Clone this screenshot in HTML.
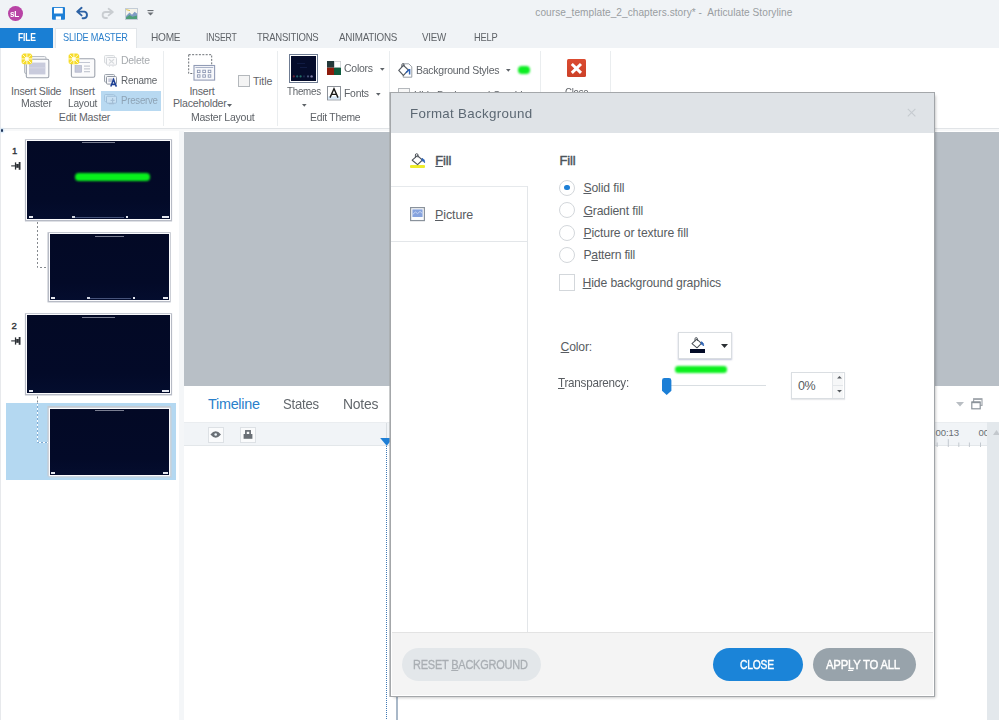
<!DOCTYPE html>
<html>
<head>
<meta charset="utf-8">
<title>Articulate Storyline</title>
<style>
html,body{margin:0;padding:0;}
html{overflow:hidden;}
#root{position:absolute;left:0;top:0;width:999px;height:720px;overflow:hidden;background:#fff;}
body{width:999px;height:720px;overflow:hidden;position:relative;background:#fff;font-family:"Liberation Sans","DejaVu Sans",sans-serif;color:#5b5f63;}
.a{position:absolute;}
.t{position:absolute;white-space:nowrap;line-height:1;}
svg{position:absolute;overflow:visible;}
.sep{position:absolute;width:1px;background:#eaedef;top:51px;height:75px;}
.thumb{position:absolute;background:#030b27;border:1px solid #fff;outline:1px solid #adb1b5;box-sizing:border-box;}
u{text-decoration:underline;text-underline-offset:1px;text-decoration-thickness:0.8px;}
.radio{position:absolute;width:16px;height:16px;border:1px solid #d3d7db;border-radius:50%;background:#fff;box-sizing:border-box;}
.pill{position:absolute;height:33px;border-radius:17px;top:648px;}
</style>
</head>
<body>
<div id="root">
<!-- title bar -->
<div class="a" style="left:0;top:0;width:999px;height:48px;background:#f0f3f6;"></div>
<div class="a" style="left:8px;top:6px;width:14.8px;height:14.8px;border-radius:50%;background:#b843a5;"></div>
<!-- quick access icons -->
<svg style="left:52px;top:7px" width="13" height="13" viewBox="0 0 13 13"><rect x="0" y="0" width="13" height="12.8" rx="1" fill="#1e7fd6"/><rect x="2" y="0.9" width="8.8" height="5.6" fill="#fff"/><rect x="3.8" y="9.4" width="5.2" height="3.4" fill="#fff"/><rect x="6.8" y="9.4" width="2.2" height="0" fill="#1e7fd6"/></svg>
<svg style="left:76px;top:7px" width="14" height="12" viewBox="0 0 14 12"><path d="M1.2 4.6 L5.6 0.8 M1.2 4.6 L5.6 8.4 M1.4 4.6 H8.4 A3.4 3.4 0 0 1 8.4 11.2 H6.6" fill="none" stroke="#2c61a4" stroke-width="1.9" stroke-linecap="round"/></svg>
<svg style="left:100px;top:8px" width="14" height="11" viewBox="0 0 14 11"><path d="M12.8 4 L8.6 0.8 M12.8 4 L8.6 7.4 M12.6 4 H5.6 A3 3 0 0 0 5.6 10 H7" fill="none" stroke="#c9cdd1" stroke-width="1.8" stroke-linecap="round"/></svg>
<svg style="left:125px;top:7.5px" width="13" height="12" viewBox="0 0 13 12"><rect x="0.5" y="0.5" width="12" height="11" fill="#f4f3ea" stroke="#c3ccd6"/><path d="M1 8 L4.5 4.6 L7 6.8 L9.6 3.8 L12 5.6 V11 H1z" fill="#7f9cc4"/><path d="M1 9.6 L4.5 7 L7.5 8.8 L12 7.6 V11 H1z" fill="#4f9f78"/><path d="M1.2 1.6 L5 2.6" stroke="#e3c44c" stroke-width="1"/></svg>
<svg style="left:147.4px;top:10.4px" width="7" height="6" viewBox="0 0 7 6"><rect x="0.5" y="0" width="6" height="1.1" fill="#6a6f74"/><path d="M0.5 2.4h6L3.5 5.6z" fill="#6a6f74"/></svg>

<!-- tabs -->
<div class="a" style="left:0;top:28px;width:53px;height:20px;background:#1a7fd4;"></div>
<div class="a" style="left:55px;top:28px;width:82px;height:20px;background:#fff;border:1px solid #e1e5e9;border-bottom:none;box-sizing:border-box;"></div>

<!-- ribbon -->
<div class="a" style="left:0;top:48px;width:999px;height:80px;background:#fff;border-bottom:1px solid #e1e4e7;"></div>
<div class="a" style="left:0;top:129px;width:999px;height:2px;background:#f7f8f9;"></div>
<div class="sep" style="left:163px"></div>
<div class="sep" style="left:277px"></div>
<div class="sep" style="left:389px"></div>
<div class="sep" style="left:540px"></div>
<div class="sep" style="left:610px"></div>
<div class="a" style="left:101px;top:91px;width:60px;height:19.5px;background:#b8d9f1;"></div>

<!-- Insert slide master icon -->
<svg style="left:21px;top:53px" width="29" height="26" viewBox="0 0 29 26">
<rect x="3.5" y="3.5" width="21.5" height="17" rx="1.5" fill="#f4f5f7" stroke="#b9bec6"/>
<rect x="5.3" y="6.2" width="22.5" height="18.5" rx="1.5" fill="#fbfbfc" stroke="#9da3ad" stroke-width="1.1"/>
<rect x="8" y="9.6" width="16.4" height="11.8" fill="#c9cbdc"/>
<rect x="8" y="14.5" width="16.4" height="0.8" fill="#d9dbe8"/>
<rect x="0.6" y="0.6" width="10.6" height="10.6" rx="2.5" fill="#f6dc2a"/>
<g stroke="#fffbe0" stroke-width="0.9"><path d="M5.9 0.2v11.4M0.2 5.9h11.4M1.4 1.4l9 9M10.4 1.4l-9 9"/></g>
<circle cx="5.9" cy="5.9" r="1.9" fill="#fffef2"/>
</svg>
<!-- Insert layout icon -->
<svg style="left:68px;top:53px" width="29" height="26" viewBox="0 0 29 26">
<rect x="3.4" y="5.7" width="23.4" height="18.6" rx="1.5" fill="#fbfbfc" stroke="#9da3ad" stroke-width="1.1"/>
<rect x="7" y="9" width="15" height="1" fill="#c3c7d3"/>
<rect x="7" y="12.6" width="6.6" height="6.6" fill="#c5c8da" stroke="#a9aec4" stroke-width=".6"/>
<rect x="16" y="12.6" width="6" height="1" fill="#b9bdc9"/><rect x="16" y="15.4" width="6" height="1" fill="#b9bdc9"/><rect x="16" y="18.2" width="6" height="1" fill="#b9bdc9"/>
<rect x="0.6" y="0.6" width="10.6" height="10.6" rx="2.5" fill="#f6dc2a"/>
<g stroke="#fffbe0" stroke-width="0.9"><path d="M5.9 0.2v11.4M0.2 5.9h11.4M1.4 1.4l9 9M10.4 1.4l-9 9"/></g>
<circle cx="5.9" cy="5.9" r="1.9" fill="#fffef2"/>
</svg>
<!-- small icons delete / rename / preserve -->
<svg style="left:103.5px;top:54.5px" width="13" height="12" viewBox="0 0 13 12"><rect x="0.5" y="0.5" width="10" height="7.6" rx="1" fill="#f7f8f9" stroke="#d9dcdf"/><rect x="2.5" y="2.5" width="10" height="7.6" rx="1" fill="#fafafb" stroke="#d3d6da"/><path d="M5 4.2l5 4.4M10 4.2l-5 4.4" stroke="#d7dadd" stroke-width="1.2"/><path d="M5.5 10.2v1.6M9 10.2v1.6" stroke="#dcdfe2"/></svg>
<svg style="left:103.5px;top:73.8px" width="13" height="13" viewBox="0 0 13 13"><rect x="0.5" y="0.5" width="10" height="7.6" rx="1" fill="#f4f5f7" stroke="#9ea5ae"/><rect x="2.5" y="2.5" width="10" height="7.6" rx="1" fill="#fafafb" stroke="#8f96a0"/><rect x="4.3" y="4.4" width="6.4" height="3.6" fill="#c5c8da"/><path d="M6.8 12.6 L9.5 5.6 L12.4 12.6 M7.8 10.4h3.6" stroke="#1c3f94" stroke-width="1.5" fill="none"/></svg>
<svg style="left:103.5px;top:94px" width="13" height="11" viewBox="0 0 13 11"><rect x="0.5" y="0.5" width="10" height="7" rx="1" fill="#c3dff3" stroke="#a5c4de"/><rect x="2.5" y="2.2" width="10" height="7" rx="1" fill="#c7e0f3" stroke="#9ebdd8"/><path d="M5 9.6h5M8.6 4v5.4M6.6 6.4h4" stroke="#a3bdd4" stroke-width="1.1"/></svg>

<!-- Insert placeholder icon -->
<svg style="left:188px;top:54px" width="28" height="27" viewBox="0 0 28 27">
<rect x="0.7" y="0.7" width="23" height="18.8" fill="none" stroke="#6b6f75" stroke-width="1" stroke-dasharray="2 1.4"/>
<rect x="6" y="11.5" width="20.6" height="14.6" fill="#f7f8fb" stroke="#929cb6" stroke-width="1.1"/>
<rect x="7.4" y="13" width="17.8" height="1" fill="#aab3c8"/>
<g fill="#fff" stroke="#8b96b2" stroke-width=".9"><rect x="9.4" y="16.2" width="2.6" height="2.4"/><rect x="14.8" y="16.2" width="2.6" height="2.4"/><rect x="20.2" y="16.2" width="2.6" height="2.4"/><rect x="9.4" y="20.8" width="2.6" height="2.4"/><rect x="14.8" y="20.8" width="2.6" height="2.4"/><rect x="20.2" y="20.8" width="2.6" height="2.4"/></g>
</svg>
<svg style="left:227.4px;top:104px" width="5" height="3" viewBox="0 0 5 3"><path d="M0 0h5L2.5 3z" fill="#5e6368"/></svg>
<!-- title checkbox -->
<div class="a" style="left:238px;top:75.4px;width:12px;height:11.6px;box-sizing:border-box;border:1px solid #b4b8bc;background:#f4f4f4;"></div>

<!-- themes -->
<div class="a" style="left:289px;top:54px;width:29px;height:29px;box-sizing:border-box;border:1px solid #6f7c92;background:#fff;"></div>
<div class="a" style="left:291px;top:56px;width:25px;height:25px;background:#050c2b;"></div>
<svg style="left:291px;top:56px" width="25" height="25" viewBox="0 0 25 25"><g opacity=".75"><circle cx="2.8" cy="20.4" r="1.1" fill="#8a2a3a"/><circle cx="6.2" cy="20.4" r="1.1" fill="#2f7f86"/><circle cx="9.6" cy="20.4" r="1.1" fill="#2f8f7a"/><circle cx="13" cy="20.4" r="1.1" fill="#1f2f55"/><circle cx="17" cy="20.4" r="1.1" fill="#5c6a90"/><circle cx="20.6" cy="20.4" r="1.2" fill="#a9a6cf"/></g><rect x="6" y="7" width="8" height="0.8" fill="#13204a"/><rect x="9" y="11" width="7" height="0.8" fill="#13204a"/></svg>
<svg style="left:301.6px;top:104.3px" width="4.6" height="2.8" viewBox="0 0 5 3"><path d="M0 0h5L2.5 3z" fill="#5e6368"/></svg>
<!-- colors icon -->
<svg style="left:327px;top:61.2px" width="14" height="14" viewBox="0 0 14 14"><rect x="0" y="0" width="7" height="6.7" fill="#23393a"/><rect x="7.4" y="0.4" width="6.2" height="6" fill="#fff" stroke="#c8ccd0" stroke-width=".8"/><rect x="0" y="6.7" width="7" height="7.3" fill="#8c1c0c"/><rect x="7" y="6.7" width="7" height="7.3" fill="#0e5b3d"/></svg>
<svg style="left:379.8px;top:67.6px" width="4.6" height="2.8" viewBox="0 0 5 3"><path d="M0 0h5L2.5 3z" fill="#5e6368"/></svg>
<!-- fonts icon -->
<svg style="left:327px;top:86.4px" width="14" height="14.4" viewBox="0 0 14 14.4"><rect x="0.5" y="0.5" width="13" height="13.4" fill="#fff" stroke="#8d9299"/><rect x="1" y="10.4" width="12" height="3" fill="#d5e6f6"/><path d="M3 11.6 L7 2.8 L11 11.6 M4.6 8.4h4.8" stroke="#1b1b1b" stroke-width="1.4" fill="none"/></svg>
<svg style="left:376.4px;top:92.8px" width="4.6" height="2.8" viewBox="0 0 5 3"><path d="M0 0h5L2.5 3z" fill="#5e6368"/></svg>

<!-- background styles -->
<svg style="left:397.6px;top:62.8px" width="15" height="15" viewBox="0 0 15 15">
<path d="M5.2 0.8h5.6l3 3v10.4H5.2z" fill="#fff" stroke="#8d949c" stroke-width=".9"/>
<path d="M0.8 7.4 L5.4 2.4 L10.4 7 L5.4 12.4z" fill="#fff" stroke="#555b62" stroke-width="1.1"/>
<path d="M3.8 4.2V1.8a1.2 1.2 0 0 1 2.4 0v2" fill="none" stroke="#555b62" stroke-width=".9"/>
<path d="M8 9.8 L11.4 6.2 M11.6 6v5.4" stroke="#2f63b5" stroke-width="1.5" fill="none"/>
</svg>
<svg style="left:505.8px;top:69px" width="4.6" height="2.8" viewBox="0 0 5 3"><path d="M0 0h5L2.5 3z" fill="#5e6368"/></svg>
<div class="a" style="left:518.4px;top:66px;width:11.4px;height:7.6px;border-radius:3.8px;background:#0cee22;filter:blur(1.3px);"></div>
<div class="a" style="left:398px;top:88.2px;width:12px;height:12px;box-sizing:border-box;border:1px solid #b4b8bc;background:#f7f7f7;"></div>
<!-- close -->
<div class="a" style="left:567.4px;top:58.5px;width:18.8px;height:18.8px;background:linear-gradient(#db4b30,#cc4128);border-radius:1.5px;"></div>
<svg style="left:567.4px;top:58.5px" width="18.8" height="18.8" viewBox="0 0 18.8 18.8"><path d="M4.8 5 L14 13.8 M14 5 L4.8 13.8" stroke="#fff" stroke-width="3"/></svg>

<div class="t" style="left:10.3px;top:8.7px;font-size:9.6px;color:#fff;letter-spacing:-0.25px;transform:scaleX(0.840);transform-origin:0 0;font-weight:bold;">sL</div>
<div class="t" style="left:535.3px;top:8.2px;font-size:10.1px;color:#999da1;letter-spacing:0.05px;">course_template_2_chapters.story* -&nbsp; Articulate Storyline</div>
<div class="t" style="left:17.6px;top:33.3px;font-size:10.3px;color:#fff;letter-spacing:-0.25px;transform:scaleX(0.826);transform-origin:0 0;font-weight:bold;">FILE</div>
<div class="t" style="left:62.7px;top:33.3px;font-size:10.3px;color:#2a7fcb;letter-spacing:-0.25px;transform:scaleX(0.893);transform-origin:0 0;">SLIDE MASTER</div>
<div class="t" style="left:151.4px;top:33.3px;font-size:10.3px;color:#5f6368;letter-spacing:-0.25px;transform:scaleX(0.982);transform-origin:0 0;">HOME</div>
<div class="t" style="left:205.6px;top:33.3px;font-size:10.3px;color:#5f6368;letter-spacing:-0.25px;transform:scaleX(0.848);transform-origin:0 0;">INSERT</div>
<div class="t" style="left:257.3px;top:33.3px;font-size:10.3px;color:#5f6368;letter-spacing:-0.25px;transform:scaleX(0.925);transform-origin:0 0;">TRANSITIONS</div>
<div class="t" style="left:339.0px;top:33.3px;font-size:10.3px;color:#5f6368;letter-spacing:-0.25px;transform:scaleX(0.956);transform-origin:0 0;">ANIMATIONS</div>
<div class="t" style="left:422.0px;top:33.3px;font-size:10.3px;color:#5f6368;letter-spacing:-0.25px;transform:scaleX(0.950);transform-origin:0 0;">VIEW</div>
<div class="t" style="left:474.0px;top:33.3px;font-size:10.3px;color:#5f6368;letter-spacing:-0.25px;transform:scaleX(0.906);transform-origin:0 0;">HELP</div>
<div class="t" style="left:11.0px;top:86.3px;font-size:10.6px;color:#5f6368;letter-spacing:-0.23px;">Insert Slide</div>
<div class="t" style="left:21.4px;top:97.9px;font-size:10.6px;color:#5f6368;letter-spacing:-0.25px;transform:scaleX(0.992);transform-origin:0 0;">Master</div>
<div class="t" style="left:69.6px;top:86.3px;font-size:10.6px;color:#5f6368;letter-spacing:-0.22px;">Insert</div>
<div class="t" style="left:68.2px;top:97.9px;font-size:10.6px;color:#5f6368;letter-spacing:-0.25px;transform:scaleX(0.962);transform-origin:0 0;">Layout</div>
<div class="t" style="left:121.0px;top:55.3px;font-size:10.6px;color:#a6aaae;letter-spacing:-0.25px;transform:scaleX(0.987);transform-origin:0 0;">Delete</div>
<div class="t" style="left:121.0px;top:75.4px;font-size:10.6px;color:#5f6368;letter-spacing:-0.25px;transform:scaleX(0.933);transform-origin:0 0;">Rename</div>
<div class="t" style="left:121.0px;top:94.7px;font-size:10.6px;color:#8ea3b5;letter-spacing:-0.25px;transform:scaleX(0.910);transform-origin:0 0;">Preserve</div>
<div class="t" style="left:58.8px;top:112.1px;font-size:10.6px;color:#5f6368;letter-spacing:-0.20px;">Edit Master</div>
<div class="t" style="left:189.4px;top:86.3px;font-size:10.6px;color:#5f6368;letter-spacing:-0.22px;">Insert</div>
<div class="t" style="left:173.0px;top:97.9px;font-size:10.6px;color:#5f6368;letter-spacing:-0.22px;">Placeholder</div>
<div class="t" style="left:190.6px;top:112.1px;font-size:10.6px;color:#5f6368;letter-spacing:-0.25px;transform:scaleX(0.993);transform-origin:0 0;">Master Layout</div>
<div class="t" style="left:253.1px;top:76.3px;font-size:10.6px;color:#5f6368;letter-spacing:-0.11px;">Title</div>
<div class="t" style="left:286.5px;top:86.3px;font-size:10.6px;color:#5f6368;letter-spacing:-0.25px;transform:scaleX(0.921);transform-origin:0 0;">Themes</div>
<div class="t" style="left:344.2px;top:62.6px;font-size:10.6px;color:#5f6368;letter-spacing:-0.25px;transform:scaleX(0.991);transform-origin:0 0;">Colors</div>
<div class="t" style="left:344.4px;top:87.7px;font-size:10.6px;color:#5f6368;letter-spacing:-0.25px;transform:scaleX(0.980);transform-origin:0 0;">Fonts</div>
<div class="t" style="left:309.9px;top:112.1px;font-size:10.6px;color:#5f6368;letter-spacing:-0.25px;transform:scaleX(0.978);transform-origin:0 0;">Edit Theme</div>
<div class="t" style="left:415.5px;top:64.6px;font-size:10.6px;color:#5f6368;letter-spacing:-0.25px;transform:scaleX(0.990);transform-origin:0 0;">Background Styles</div>
<div class="t" style="left:414.4px;top:90.0px;font-size:10.6px;color:#5f6368;letter-spacing:-0.25px;transform:scaleX(0.981);transform-origin:0 0;">Hide Background Graphics</div>
<div class="t" style="left:565.0px;top:87.3px;font-size:10.6px;color:#5f6368;letter-spacing:-0.25px;transform:scaleX(0.901);transform-origin:0 0;">Close</div>

<!-- left panel -->
<div class="a" style="left:0;top:131px;width:179px;height:589px;background:#fff;"></div>
<div class="a" style="left:179px;top:131px;width:5px;height:589px;background:#f4f6f8;"></div>
<div class="a" style="left:0;top:48px;width:1px;height:672px;background:#e7e9ec;"></div>
<div class="a" style="left:0.6px;top:129.2px;width:2.4px;height:2.4px;border-radius:50%;background:#1f3358;box-shadow:0 0 1.5px 1px #cfe4f6;"></div>
<div class="a" style="left:5.5px;top:403.3px;width:170px;height:76.7px;background:#b4d8f1;"></div>
<div class="a" style="left:27.3px;top:140.5px;width:142.50px;height:78.25px;background:linear-gradient(#030925 0%,#030a28 75%,#040d2e 100%);box-shadow:0 0 0 1px #fbfbfd,0 0.35px 0 2.1px #b7bbc5;"></div>
<div class="a" style="left:50.2px;top:234.2px;width:118.80px;height:65.60px;background:linear-gradient(#030925 0%,#030a28 75%,#040d2e 100%);box-shadow:0 0 0 1px #fbfbfd,-0.4px 0.3px 0 2.1px #b7bbc5;"></div>
<div class="a" style="left:27.3px;top:315px;width:142.50px;height:78.00px;background:linear-gradient(#030925 0%,#030a28 75%,#040d2e 100%);box-shadow:0 0 0 1px #fbfbfd,0 0.35px 0 2.1px #b7bbc5;"></div>
<div class="a" style="left:50.2px;top:409.2px;width:118.80px;height:65.40px;background:linear-gradient(#030925 0%,#030a28 75%,#040d2e 100%);box-shadow:0 0 0 1.2px #fbfbfd,-0.4px -0.9px 0 2.2px #c3cad2,0.8px 0.6px 0 2.2px #bfd3e3;"></div>

<!-- thumbnail details -->
<div class="t" style="left:12px;top:145.9px;font-size:9.6px;color:#2f3338;-webkit-text-stroke:0.35px #2f3338;">1</div>
<div class="t" style="left:11.4px;top:320.7px;font-size:9.6px;color:#2f3338;-webkit-text-stroke:0.35px #2f3338;">2</div>

<svg style="left:10.6px;top:162px" width="10" height="8" viewBox="0 0 10 8"><path d="M0.2 3.9H4" stroke="#2d3136" stroke-width="1.1"/><rect x="3.9" y="0.4" width="1.3" height="7.2" fill="#2d3136"/><rect x="5.2" y="2" width="2.6" height="3.8" fill="#2d3136"/><rect x="7.7" y="0" width="1.8" height="7.8" fill="#2d3136"/></svg>
<svg style="left:10.6px;top:337px" width="10" height="8" viewBox="0 0 10 8"><path d="M0.2 3.9H4" stroke="#2d3136" stroke-width="1.1"/><rect x="3.9" y="0.4" width="1.3" height="7.2" fill="#2d3136"/><rect x="5.2" y="2" width="2.6" height="3.8" fill="#2d3136"/><rect x="7.7" y="0" width="1.8" height="7.8" fill="#2d3136"/></svg>
<svg style="left:0;top:0" width="200" height="500" viewBox="0 0 200 500"><path d="M37.5 222V267.5H47.5" fill="none" stroke="#85898e" stroke-width="1" stroke-dasharray="2 2"/><path d="M37.5 396.5V403" fill="none" stroke="#85898e" stroke-width="1" stroke-dasharray="2 2"/><path d="M37.5 403V442.5H48" fill="none" stroke="#7ea9d0" stroke-width="1"/><path d="M37.5 404V442.5H48" fill="none" stroke="#fff" stroke-width="1" stroke-dasharray="2 2"/></svg>
<div class="a" style="left:75px;top:173.4px;width:74.6px;height:7.6px;border-radius:3.8px;background:#08f01c;filter:blur(1.1px);"></div>
<div class="a" style="left:82.3px;top:142px;width:32.70px;height:1.00px;background:#c9cdda;opacity:.6;"></div>
<div class="a" style="left:95px;top:235.6px;width:29.20px;height:1.00px;background:#c9cdda;opacity:.6;"></div>
<div class="a" style="left:82.3px;top:316.6px;width:32.70px;height:1.00px;background:#c9cdda;opacity:.6;"></div>
<div class="a" style="left:95px;top:410.2px;width:29.20px;height:1.00px;background:#c9cdda;opacity:.6;"></div>
<div class="a" style="left:28.5px;top:216px;width:4.60px;height:2.00px;background:#e4e7ef;"></div>
<div class="a" style="left:162.3px;top:216px;width:6.70px;height:2.00px;background:#e4e7ef;"></div>
<div class="a" style="left:72px;top:216.6px;width:52.00px;height:1.00px;background:#46537a;"></div>
<div class="a" style="left:71.5px;top:216.1px;width:3.50px;height:1.90px;background:#cfd3de;"></div>
<div class="a" style="left:126px;top:216px;width:2.40px;height:2.00px;background:#e4e7ef;"></div>
<div class="a" style="left:51px;top:297px;width:3.80px;height:2.00px;background:#e4e7ef;"></div>
<div class="a" style="left:163px;top:297px;width:5.40px;height:2.00px;background:#e4e7ef;"></div>
<div class="a" style="left:87.4px;top:297.6px;width:43.60px;height:1.00px;background:#46537a;"></div>
<div class="a" style="left:87px;top:297.1px;width:3.00px;height:1.90px;background:#cfd3de;"></div>
<div class="a" style="left:133.2px;top:297px;width:2.00px;height:2.00px;background:#e4e7ef;"></div>
<div class="a" style="left:28.5px;top:390.3px;width:4.60px;height:2.00px;background:#e4e7ef;"></div>
<div class="a" style="left:162.3px;top:390.3px;width:6.70px;height:2.00px;background:#e4e7ef;"></div>
<div class="a" style="left:51.4px;top:472px;width:3.60px;height:1.80px;background:#e4e7ef;"></div>
<div class="a" style="left:162.9px;top:472px;width:5.20px;height:1.80px;background:#e4e7ef;"></div>

<!-- canvas -->
<div class="a" style="left:184px;top:131.5px;width:815px;height:254.2px;background:#b8bfc6;"></div>

<!-- timeline -->
<div class="a" style="left:184px;top:386px;width:815px;height:334px;background:#fff;"></div>
<div class="a" style="left:184px;top:422px;width:803px;height:24px;background:#f1f4f7;border-bottom:1px solid #e3e7ea;border-top:1px solid #eaedf0;box-sizing:border-box;"></div>
<div class="a" style="left:986.5px;top:422px;width:12.5px;height:298px;background:#e3e8ec;"></div>

<div class="t" style="left:208.0px;top:397.4px;font-size:14.4px;color:#2a7fcb;letter-spacing:-0.27px;">Timeline</div>
<div class="t" style="left:283.0px;top:397.4px;font-size:14.4px;color:#62676c;letter-spacing:-0.25px;transform:scaleX(0.910);transform-origin:0 0;">States</div>
<div class="t" style="left:343.0px;top:397.4px;font-size:14.4px;color:#62676c;letter-spacing:-0.25px;transform:scaleX(0.967);transform-origin:0 0;">Notes</div>
<div class="t" style="left:935.6px;top:428.1px;font-size:9.6px;color:#6a6f74;letter-spacing:-0.15px;">00:13</div>
<div class="t" style="left:978.4px;top:428.1px;font-size:9.6px;color:#6a6f74;letter-spacing:-0.10px;">00:14</div>
<div class="a" style="left:208px;top:427px;width:16px;height:15.5px;box-sizing:border-box;border:1px solid #dde1e5;background:#fafbfc;"></div>
<svg style="left:210.4px;top:430.2px" width="11.4" height="9" viewBox="0 0 10 8"><path d="M0.3 4 Q5 -1.6 9.7 4 Q5 9.6 0.3 4z" fill="#6a7076"/><circle cx="5" cy="4" r="1.15" fill="#eef6fb"/></svg>
<div class="a" style="left:239.5px;top:427px;width:16.5px;height:15.5px;box-sizing:border-box;border:1px solid #dde1e5;background:#fafbfc;"></div>
<svg style="left:243px;top:430px" width="10" height="9" viewBox="0 0 10 9"><rect x="0.6" y="4" width="8.8" height="4.8" fill="#6a7076"/><rect x="2.9" y="0.9" width="4.2" height="4.4" fill="none" stroke="#6a7076" stroke-width="1.7"/></svg>
<div class="a" style="left:386px;top:423px;width:1px;height:23px;background:#d9dee2;"></div>
<svg style="left:379.9px;top:438.3px" width="13.4" height="8" viewBox="0 0 13 8"><path d="M0 0h13L6.5 7.8z" fill="#1e7fd6"/></svg>
<div class="a" style="left:386px;top:446px;width:1px;height:274px;background:repeating-linear-gradient(to bottom,#3f78b5 0,#3f78b5 1px,rgba(255,255,255,0) 1px,rgba(255,255,255,0) 2px);"></div>
<div class="a" style="left:396.2px;top:695px;width:1.5px;height:25px;background:#a9b8c8;"></div>
<!-- ruler ticks -->
<svg style="left:930px;top:438px" width="60" height="9" viewBox="0 0 60 9"><path d="M7.2 4.5V9M18.3 1.2V9M28.8 4.5V9M39.4 4.5V9M50.5 4.5V9" stroke="#c3c9cf" stroke-width="1"/></svg>
<div class="a" style="left:986.5px;top:422px;width:12.5px;height:298px;background:#e3e8ec;"></div>
<svg style="left:993.2px;top:430px" width="7" height="5" viewBox="0 0 7 5"><path d="M0 5h7L3.5 0z" fill="#c3c8cd"/></svg>
<!-- panel controls -->
<svg style="left:956px;top:401.5px" width="8" height="5" viewBox="0 0 8 5"><path d="M0 0h8L4 4.6z" fill="#b9bec3"/></svg>
<svg style="left:971px;top:398px" width="12" height="12" viewBox="0 0 12 12"><rect x="2.6" y="0.8" width="8.4" height="6.6" fill="none" stroke="#a3a9af" stroke-width="1.2"/><rect x="2.6" y="0.4" width="8.4" height="1.6" fill="#a3a9af"/><rect x="0.8" y="4" width="8.4" height="6.8" fill="#fff" stroke="#8d949b" stroke-width="1.2"/><rect x="0.8" y="3.6" width="8.4" height="1.6" fill="#8d949b"/></svg>


<!-- dialog -->
<div class="a" id="dialog" style="left:391px;top:93px;width:543.4px;height:602.6px;background:#fff;box-shadow:-0.6px 0 0 1px #a4a7aa,0 0 0 1px #a0a4a8,1.5px 1.5px 3px rgba(0,0,0,0.28);"></div>
<div class="a" style="left:391px;top:93px;width:543.4px;height:39.6px;background:#dfe3e7;"></div>
<div class="a" style="left:392.4px;top:632px;width:540.6px;height:62.6px;background:#f4f4f4;border-top:1px solid #e3e3e3;box-sizing:border-box;"></div>
<!-- dialog contents -->
<svg style="left:907.2px;top:108px" width="9.2" height="9.2" viewBox="0 0 9 9"><path d="M0.8 0.8L8.2 8.2M8.2 0.8L0.8 8.2" stroke="#c6cbd0" stroke-width="1.1"/></svg>
<!-- sidebar -->
<div class="a" style="left:390.5px;top:186px;width:136.5px;height:1px;background:#e6e9ec;"></div>
<div class="a" style="left:390.5px;top:241px;width:136.5px;height:1px;background:#e3e6e9;"></div>
<div class="a" style="left:526.5px;top:186px;width:1px;height:446px;background:#e3e6e9;"></div>
<!-- fill icon -->
<div class="a" style="left:409.8px;top:164.6px;width:15.2px;height:3.2px;background:#eeec2a;border-radius:1px;"></div>
<svg style="left:411px;top:152.6px" width="15" height="13" viewBox="0 0 15 13">
<path d="M1.2 7.2 L6.4 2.6 L11.4 7 L6.6 11.6z" fill="#fff" stroke="#4d535a" stroke-width="1.1" stroke-linejoin="round"/>
<path d="M4.4 4.6V2a1.3 1.3 0 0 1 2.6 0v2.4" fill="none" stroke="#4d535a" stroke-width="1"/>
<path d="M11 5.4c1.8 0.4 2.8 1.8 2.6 4.4c-0.9-1.2-1.6-1.8-2.8-2.2z" fill="#2f63b5" stroke="#2f63b5" stroke-width=".8"/>
</svg>
<!-- picture icon -->
<svg style="left:410px;top:207px" width="15" height="14.2" viewBox="0 0 15 14.2"><rect x="0.6" y="0.6" width="13.8" height="13" fill="#fbfcfd" stroke="#8a929c" stroke-width="1.2"/><rect x="2.4" y="2.4" width="10.2" height="7.6" fill="#86a3de"/><path d="M2.6 7.6 L5.4 5 L7.6 6.6 L10 4.4 L12.4 6.4" stroke="#c7d5f1" stroke-width="1" fill="none"/></svg>
<!-- radios -->
<div class="radio" style="left:559px;top:179.5px;"></div>
<div class="a" style="left:564.2px;top:184.7px;width:5.6px;height:5.6px;border-radius:50%;background:#1e7fd6;"></div>
<div class="radio" style="left:559px;top:202px;"></div>
<div class="radio" style="left:559px;top:224.5px;"></div>
<div class="radio" style="left:559px;top:247px;"></div>
<div class="a" style="left:559.1px;top:274.4px;width:16px;height:16.2px;box-sizing:border-box;border:1px solid #d3d7db;background:#fff;"></div>
<!-- color button -->
<div class="a" style="left:677.5px;top:332px;width:54.5px;height:27px;box-sizing:border-box;border:1px solid #d9dde1;background:#fff;box-shadow:0 1px 1.5px rgba(120,130,170,0.45);"></div>
<div class="a" style="left:690px;top:349px;width:15px;height:3.8px;background:#030b27;"></div>
<svg style="left:691px;top:337.4px" width="14" height="12" viewBox="0 0 14 12">
<path d="M1 6.6 L5.8 2.2 L10.4 6.4 L6 10.8z" fill="#fff" stroke="#4d535a" stroke-width="1.05" stroke-linejoin="round"/>
<path d="M4 4.2V1.8a1.2 1.2 0 0 1 2.4 0v2.2" fill="none" stroke="#4d535a" stroke-width=".95"/>
<path d="M10.2 4.8c1.7 0.4 2.6 1.7 2.4 4.2c-0.8-1.1-1.5-1.7-2.6-2.1z" fill="#2f63b5" stroke="#2f63b5" stroke-width=".8"/>
</svg>
<svg style="left:721.2px;top:344px" width="7" height="4" viewBox="0 0 7 4"><path d="M0 0h7L3.5 3.9z" fill="#2b2f33"/></svg>
<div class="a" style="left:675px;top:366px;width:51.5px;height:6.6px;border-radius:3.3px;background:#0cf01e;filter:blur(1px);"></div>
<!-- slider -->
<div class="a" style="left:668px;top:384.5px;width:98px;height:1.1px;background:#d9dee2;"></div>
<svg style="left:661.8px;top:378px" width="9.4" height="17" viewBox="0 0 9.4 17"><path d="M0 2.4a2.4 2.4 0 0 1 2.4-2.4h4.6a2.4 2.4 0 0 1 2.4 2.4v10.4L4.7 17 0 12.8z" fill="#1c7fd6"/></svg>
<!-- spinner -->
<div class="a" style="left:791px;top:372px;width:53.5px;height:26.6px;box-sizing:border-box;border:1px solid #dadee2;background:#fff;box-shadow:0 1px 1px rgba(150,155,165,0.22);"></div>
<div class="a" style="left:832.4px;top:373px;width:11.1px;height:24.6px;background:#f6f7f8;border-left:1px solid #e4e7ea;box-sizing:border-box;"></div>
<div class="a" style="left:832.4px;top:384.6px;width:11.1px;height:1px;background:#e4e7ea;"></div>
<svg style="left:836.5px;top:376.4px" width="5" height="2.6" viewBox="0 0 5.6 3"><path d="M0 3h5.6L2.8 0z" fill="#55595e"/></svg>
<svg style="left:836.5px;top:390.4px" width="5" height="2.6" viewBox="0 0 5.6 3"><path d="M0 0h5.6L2.8 3z" fill="#55595e"/></svg>
<!-- buttons -->
<div class="pill" style="left:402.4px;width:138.2px;background:#e3e7ea;"></div>
<div class="pill" style="left:713.4px;width:90px;background:#1b84d8;"></div>
<div class="pill" style="left:812.8px;width:103.4px;background:#98a3ab;"></div>

<div class="t" style="left:409.6px;top:106.6px;font-size:13.2px;color:#5c6873;letter-spacing:0.30px;transform:scaleX(1.012);transform-origin:0 0;">Format Background</div>
<div class="t" style="left:435.3px;top:155.0px;font-size:12.8px;color:#4c545c;letter-spacing:-0.12px;-webkit-text-stroke:0.45px #4c545c;"><u>F</u>ill</div>
<div class="t" style="left:435.0px;top:208.7px;font-size:12.5px;color:#585c61;letter-spacing:-0.10px;"><u>P</u>icture</div>
<div class="t" style="left:559.5px;top:155.0px;font-size:12.8px;color:#4c545c;letter-spacing:-0.12px;-webkit-text-stroke:0.45px #4c545c;">Fill</div>
<div class="t" style="left:583.4px;top:182.3px;font-size:12.2px;color:#585c61;letter-spacing:-0.10px;"><u>S</u>olid fill</div>
<div class="t" style="left:583.4px;top:204.5px;font-size:12.2px;color:#585c61;letter-spacing:-0.15px;"><u>G</u>radient fill</div>
<div class="t" style="left:583.4px;top:227.2px;font-size:12.2px;color:#585c61;letter-spacing:-0.12px;"><u>P</u>icture or texture fill</div>
<div class="t" style="left:583.4px;top:249.3px;font-size:12.2px;color:#585c61;letter-spacing:-0.21px;">P<u>a</u>ttern fill</div>
<div class="t" style="left:582.6px;top:276.9px;font-size:12.2px;color:#585c61;letter-spacing:-0.13px;"><u>H</u>ide background graphics</div>
<div class="t" style="left:560.6px;top:341.4px;font-size:12.2px;color:#585c61;letter-spacing:-0.19px;"><u>C</u>olor:</div>
<div class="t" style="left:558.4px;top:376.8px;font-size:12.2px;color:#585c61;letter-spacing:-0.25px;transform:scaleX(0.956);transform-origin:0 0;"><u>T</u>ransparency:</div>
<div class="t" style="left:798.0px;top:379.9px;font-size:12.5px;color:#585c61;letter-spacing:-0.38px;">0%</div>
<div class="t" style="left:413.0px;top:659.1px;font-size:12.3px;color:#a9aeb3;letter-spacing:-0.25px;transform:scaleX(0.894);transform-origin:0 0;-webkit-text-stroke:0.3px #a9aeb3;">RESET <u>B</u>ACKGROUND</div>
<div class="t" style="left:739.8px;top:659.1px;font-size:12.3px;color:#fff;letter-spacing:-0.25px;transform:scaleX(0.838);transform-origin:0 0;-webkit-text-stroke:0.4px #fff;">CLOSE</div>
<div class="t" style="left:826.4px;top:659.1px;font-size:12.3px;color:#fff;letter-spacing:-0.25px;transform:scaleX(0.922);transform-origin:0 0;-webkit-text-stroke:0.4px #fff;">APP<u>L</u>Y TO ALL</div>
</div>
</body>
</html>
